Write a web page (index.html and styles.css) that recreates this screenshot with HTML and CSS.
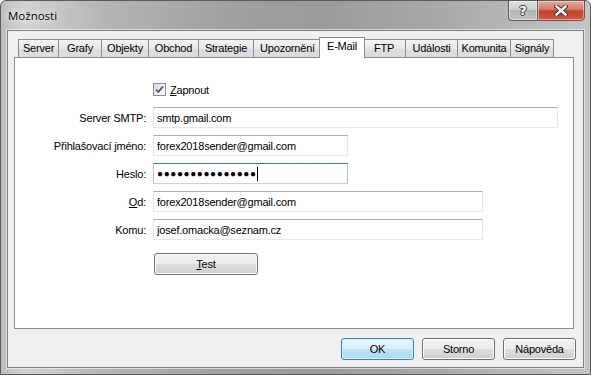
FILE: index.html
```html
<!DOCTYPE html>
<html lang="cs">

<head>
    <meta charset="UTF-8">
    <meta name="viewport" content="width=device-width, initial-scale=1.0">
    <title>Možnosti</title>
    <link rel="stylesheet" href="styles.css">
</head>

<body>
    <div class="window">
        <div class="titlebar">
            <span class="title">Možnosti</span>
            <div class="caption-buttons">
                <div class="cap-btn help"><span>?</span></div>
                <div class="cap-btn close">
                    <svg width="14" height="11" viewBox="0 0 14 11">
                        <path d="M2.5 1.5 L11.5 9.5 M11.5 1.5 L2.5 9.5" stroke="#3a3a3a" stroke-width="4.4" stroke-linecap="square" />
                        <path d="M2.5 1.5 L11.5 9.5 M11.5 1.5 L2.5 9.5" stroke="#fff" stroke-width="2.4" stroke-linecap="square" />
                    </svg>
                </div>
            </div>
        </div>

        <div class="client">
            <ul class="tabs">
                <li class="tab t-server">Server</li>
                <li class="tab t-grafy">Grafy</li>
                <li class="tab t-objekty">Objekty</li>
                <li class="tab t-obchod">Obchod</li>
                <li class="tab t-strategie">Strategie</li>
                <li class="tab t-upozorneni">Upozornění</li>
                <li class="tab t-email selected">E-Mail</li>
                <li class="tab t-ftp">FTP</li>
                <li class="tab t-udalosti">Události</li>
                <li class="tab t-komunita">Komunita</li>
                <li class="tab t-signaly">Signály</li>
            </ul>

            <div class="panel">
                <form class="form">
                    <span></span>
                    <label class="check">
                        <span class="box">
                            <svg width="11" height="11" viewBox="0 0 11 11">
                                <path d="M2 5.5 L4.3 8 L9 2.5" fill="none" stroke="#3b5a8f" stroke-width="1.8" />
                            </svg>
                        </span>
                        <span><u>Z</u>apnout</span>
                    </label>

                    <label class="lbl" for="smtp">Server SMTP:</label>
                    <input class="field w-long" id="smtp" type="text" value="smtp.gmail.com">

                    <label class="lbl" for="login">Přihlašovací jméno:</label>
                    <input class="field w-short" id="login" type="text" value="forex2018sender@gmail.com">

                    <label class="lbl">Heslo:</label>
                    <div class="field w-short focused"><span class="dots">●●●●●●●●●●●●●●●</span><span class="caret"></span></div>

                    <label class="lbl" for="from"><u>O</u>d:</label>
                    <input class="field w-mid" id="from" type="text" value="forex2018sender@gmail.com">

                    <label class="lbl" for="to">Komu:</label>
                    <input class="field w-mid" id="to" type="text" value="josef.omacka@seznam.cz">

                    <span></span>
                    <button type="button" class="btn test"><u>T</u>est</button>
                </form>
            </div>

            <div class="actions">
                <button type="button" class="btn default">OK</button>
                <button type="button" class="btn">Storno</button>
                <button type="button" class="btn">Nápověda</button>
            </div>
        </div>
    </div>
</body>

</html>
```

FILE: styles.css
```css
body {
    margin: 0;
    padding: 0;
    font-family: "Liberation Sans", Arial, sans-serif;
    font-size: 11px;
    letter-spacing: -0.2px;
    color: #000;
    background-color: #fff;
}

.window {
    box-sizing: border-box;
    width: 591px;
    height: 375px;
    border: 1px solid #5b5b5b;
    border-radius: 6px 6px 0 0;
    background: linear-gradient(90deg, #bdbdbd 0%, #d2d2d2 4%, #b4b4b4 18%, #9f9f9f 40%, #9b9b9b 55%, #a9a9a9 75%, #bcbcbc 92%, #c4c4c4 100%);
    overflow: hidden;
}

/* title bar */
.titlebar {
    height: 29px;
    display: flex;
    justify-content: space-between;
    align-items: flex-start;
}

.title {
    font-family: "Open Sans", "Noto Sans", sans-serif;
    font-size: 11.5px;
    letter-spacing: 0;
    line-height: 14px;
    padding: 8px 0 0 7px;
    color: #000;
    text-shadow: 0 0 6px #fff, 0 0 10px #fff;
}

.caption-buttons {
    display: flex;
    margin-right: 5px;
    margin-top: -1px;
}

.cap-btn {
    box-sizing: border-box;
    height: 21px;
    display: flex;
    align-items: center;
    justify-content: center;
    border: 1px solid #5a5a5a;
    box-shadow: inset 0 0 0 1px rgba(255, 255, 255, 0.45);
}

.help {
    width: 29px;
    border-right: none;
    border-radius: 0 0 0 4px;
    background: linear-gradient(#dedede 0%, #cfcfcf 45%, #b3b3b3 50%, #c2c2c2 100%);
}

.help span {
    font-family: "DejaVu Sans", sans-serif;
    font-weight: bold;
    font-size: 13px;
    line-height: 13px;
    color: #fff;
    text-shadow: 1px 0 0 #3a3a3a, -1px 0 0 #3a3a3a, 0 1px 0 #3a3a3a, 0 -1px 0 #3a3a3a;
}

.close {
    width: 48px;
    border-radius: 0 0 4px 0;
    background: linear-gradient(#e7a79a 0%, #d9806d 40%, #c2412a 55%, #cf5b3f 100%);
}

/* client area */
.client {
    box-sizing: border-box;
    height: 338px;
    margin: 0 6px;
    border: 1px solid #7f7f7f;
    box-shadow: 0 0 0 1px rgba(255, 255, 255, 0.55);
    background-color: #f0f0f0;
    padding-top: 6px;
}

/* tabs */
.tabs {
    list-style: none;
    margin: 0 9px 0 6px;
    padding: 0 0 0 4px;
    height: 20px;
    display: flex;
    align-items: flex-end;
}

.tab {
    box-sizing: border-box;
    flex-shrink: 0;
    height: 18px;
    margin-left: -1px;
    border: 1px solid #898c95;
    border-bottom: none;
    background: linear-gradient(#f3f3f3, #e8e8e8 50%, #dfdfdf 51%, #dcdcdc);
    text-align: center;
    line-height: 16px;
}

.tab:first-child {
    margin-left: 0;
}

.tab.selected {
    position: relative;
    z-index: 1;
    height: 21px;
    margin: 0 -2px -1px -3px;
    background: #fff;
    line-height: 17px;
}

.t-server { width: 41px; }
.t-grafy { width: 44px; }
.t-objekty { width: 48px; }
.t-obchod { width: 51px; }
.t-strategie { width: 56px; }
.t-upozorneni { width: 69px; }
.t-email { width: 46px; }
.t-ftp { width: 44px; }
.t-udalosti { width: 53px; }
.t-komunita { width: 54px; }
.t-signaly { width: 44px; }

.panel {
    box-sizing: border-box;
    height: 272px;
    margin: 0 9px 0 6px;
    border: 1px solid #898c95;
    background-color: #fff;
}

/* form */
.form {
    display: grid;
    grid-template-columns: 132px auto;
    column-gap: 6px;
    row-gap: 7px;
    align-items: center;
    justify-items: start;
    padding-top: 25px;
}

.check {
    display: flex;
    align-items: center;
    gap: 4px;
    height: 13px;
    margin-bottom: 4px;
}

.box {
    box-sizing: border-box;
    width: 13px;
    height: 13px;
    border: 1px solid #8e8f8f;
    background: linear-gradient(135deg, #dcdcdc, #fbfbfb);
    display: flex;
    align-items: center;
    justify-content: center;
}

.lbl {
    justify-self: end;
    padding-right: 1px;
}

.field {
    box-sizing: border-box;
    height: 21px;
    margin: 0;
    padding: 0 3px;
    border: 1px solid;
    border-color: #abadb3 #e3e9ef #e3e9ef #e2e3ea;
    background-color: #fff;
    font-family: "Liberation Sans", Arial, sans-serif;
    font-size: 11px;
    letter-spacing: -0.2px;
    color: #000;
    outline: none;
}

.w-long { width: 405px; }
.w-short { width: 195px; }
.w-mid { width: 330px; }

.focused {
    display: flex;
    align-items: center;
    border-color: #3d7bad #a4c9e3 #b7d9ed #a4c9e3;
}

.dots {
    font-size: 10px;
    letter-spacing: 0.6px;
}

.caret {
    width: 1px;
    height: 14px;
    background-color: #000;
}

.btn {
    box-sizing: border-box;
    height: 22px;
    padding: 0;
    border: 1px solid #707070;
    border-radius: 3px;
    background: linear-gradient(#f2f2f2 0%, #ebebeb 50%, #dddddd 51%, #cfcfcf 100%);
    box-shadow: inset 0 0 0 1px #fcfcfc;
    font-family: "Liberation Sans", Arial, sans-serif;
    font-size: 11px;
    letter-spacing: -0.2px;
    color: #000;
}

.test {
    width: 104px;
    margin-top: 6px;
    margin-left: 1px;
}

/* bottom buttons */
.actions {
    display: flex;
    justify-content: flex-end;
    gap: 8px;
    margin: 9px 7px 0 0;
}

.actions .btn {
    width: 73px;
}

.btn.default {
    border-color: #3c7fb1;
    background: linear-gradient(#e9f5fc 0%, #d9effb 50%, #bde3f7 51%, #a9d8f3 100%);
    box-shadow: inset 0 0 0 1px #def1fb;
}
```
